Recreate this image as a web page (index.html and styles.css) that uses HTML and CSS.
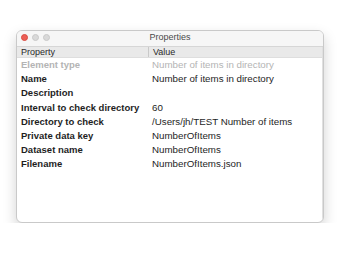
FILE: index.html
```html
<!DOCTYPE html>
<html lang="en">
<head>
<meta charset="UTF-8">
<title>Properties</title>
<link rel="stylesheet" href="styles.css">
</head>
<body>

<div class="window">
  <div class="titlebar">
    <div class="lights">
      <span class="light close"></span>
      <span class="light"></span>
      <span class="light"></span>
    </div>
    <div class="title">Properties</div>
  </div>

  <div class="table">
    <div class="head">
      <div class="cell name">Property</div>
      <div class="cell value">Value</div>
    </div>
    <div class="row dim">
      <div class="cell name">Element type</div>
      <div class="cell value">Number of items in directory</div>
    </div>
    <div class="row">
      <div class="cell name">Name</div>
      <div class="cell value">Number of items in directory</div>
    </div>
    <div class="row">
      <div class="cell name">Description</div>
      <div class="cell value"></div>
    </div>
    <div class="row">
      <div class="cell name">Interval to check directory</div>
      <div class="cell value">60</div>
    </div>
    <div class="row">
      <div class="cell name">Directory to check</div>
      <div class="cell value">/Users/jh/TEST Number of items</div>
    </div>
    <div class="row">
      <div class="cell name">Private data key</div>
      <div class="cell value">NumberOfItems</div>
    </div>
    <div class="row">
      <div class="cell name">Dataset name</div>
      <div class="cell value">NumberOfItems</div>
    </div>
    <div class="row">
      <div class="cell name">Filename</div>
      <div class="cell value">NumberOfItems.json</div>
    </div>
  </div>
</div>

</body>
</html>
```

FILE: styles.css
```css
body {
  margin: 0;
  background-color: #fff;
  font-family: 'Liberation Sans', Arial, sans-serif;
  color: #1e1e1e;
}
.window {
  width: 306px;
  height: 191px;
  margin: 30px 0 0 16px;
  border: 1px solid #c9c9c9;
  border-radius: 6px;
  background-color: #fff;
  box-shadow: 0 6px 14px rgba(0, 0, 0, 0.18);
  overflow: hidden;
}
.titlebar {
  position: relative;
  height: 15px;
  border-bottom: 1px solid #d6d6d6;
  background-color: #f6f6f6;
}
.lights {
  display: flex;
  gap: 4px;
  padding: 3px 0 0 4px;
}
.light {
  width: 5px;
  height: 5px;
  border-radius: 50%;
  background-color: #d9d9d9;
  border: 0.5px solid #c8c8c8;
}
.light.close {
  background-color: #ec5f56;
  border-color: #d84c43;
}
.title {
  position: absolute;
  left: 0;
  right: 0;
  top: 1px;
  text-align: center;
  font-size: 9px;
  color: #4a4a4a;
}
.table {
  width: 305px;
  border-right: 1px solid #e0e0e0;
  height: 100%;
}
.head {
  display: flex;
  height: 10px;
  line-height: 10px;
  font-size: 9px;
  background-color: #e9e9e9;
  border-bottom: 1px solid #dedede;
  color: #2a2a2a;
}
.head .name {
  border-right: 1px solid #c9c9c9;
}
.row {
  display: flex;
  height: 14.2px;
  line-height: 13px;
  font-size: 9.5px;
}
.cell.name {
  width: 127px;
  padding-left: 4px;
  white-space: nowrap;
}
.row .name {
  font-weight: bold;
}
.cell.value {
  padding-left: 4px;
  white-space: nowrap;
}
.row .value {
  font-size: 9.75px;
}
.row.dim {
  color: #b4b4b4;
}
```
